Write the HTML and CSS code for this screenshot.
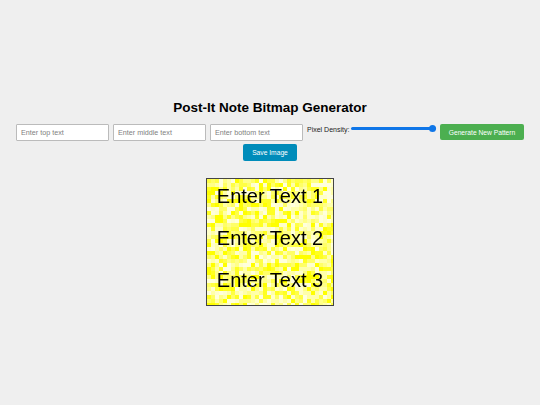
FILE: index.html
```html
<!DOCTYPE html>
<html lang="en">
<head>
    <meta charset="UTF-8">
    <meta name="viewport" content="width=device-width, initial-scale=1.0">
    <title>Post-It Note Bitmap Generator</title>
    <link rel="stylesheet" href="styles.css">
</head>
<body>
    <div class="app">
        <h1 class="title">Post-It Note Bitmap Generator</h1>
        <div class="controls">
            <input type="text" class="text-input" placeholder="Enter top text">
            <input type="text" class="text-input" placeholder="Enter middle text">
            <input type="text" class="text-input" placeholder="Enter bottom text">
            <label class="density-label" for="density">Pixel Density:</label>
            <input type="range" id="density" class="density" min="1" max="10" value="10">
            <button class="button generate">Generate New Pattern</button>
            <button class="button save">Save Image</button>
        </div>
        <div class="note">
            <canvas id="pattern" class="pattern" width="134" height="134"></canvas>
            <div class="note-text">
                <div>Enter Text 1</div>
                <div>Enter Text 2</div>
                <div>Enter Text 3</div>
            </div>
        </div>
    </div>

    <script src="script.js"></script>
</body>
</html>
```

FILE: styles.css
```css
body {
    font-family: "Liberation Sans", Arial, sans-serif;
    display: flex;
    justify-content: center;
    align-items: center;
    height: 100vh;
    margin: 0;
    background-color: #efefef;
}
.app {
    width: 540px;
    display: flex;
    flex-direction: column;
    align-items: center;
}
.title {
    margin: 0 0 8px;
    font-size: 13.5px;
    line-height: 17px;
    color: #000;
}
.controls {
    width: 100%;
    display: flex;
    flex-wrap: wrap;
    justify-content: center;
    align-items: flex-start;
    gap: 3px 4px;
}
.text-input {
    width: 93px;
    height: 17px;
    padding: 0 4px;
    box-sizing: border-box;
    font-family: inherit;
    font-size: 7.2px;
    background-color: #fff;
    border: 1px solid #bbb;
    border-radius: 1px;
}
.text-input::placeholder {
    color: #808080;
}
.density-label {
    width: 40px;
    font-size: 7px;
    line-height: 10px;
    padding-top: 1px;
    white-space: nowrap;
    color: #222;
}
.density {
    width: 85px;
    height: 8px;
    margin: 0;
    appearance: none;
    background: transparent;
}
.density::-webkit-slider-runnable-track {
    height: 3px;
    border-radius: 2px;
    background-color: #0f76e8;
}
.density::-webkit-slider-thumb {
    appearance: none;
    width: 7px;
    height: 7px;
    margin-top: -2px;
    border-radius: 50%;
    background-color: #0f76e8;
}
.button {
    height: 16px;
    padding: 0;
    font-family: inherit;
    font-size: 6.7px;
    color: #fff;
    border: none;
    border-radius: 2px;
}
.generate {
    width: 84px;
    background-color: #4caf50;
}
.save {
    width: 54px;
    height: 17px;
    background-color: #008cba;
}
.note {
    position: relative;
    width: 128px;
    height: 128px;
    margin-top: 17px;
    box-sizing: border-box;
    border: 1px solid #444;
    overflow: hidden;
}
.pattern {
    display: block;
    margin: -4px;
    filter: blur(0.6px);
}
.note-text {
    position: absolute;
    inset: 0;
    display: flex;
    flex-direction: column;
    align-items: center;
    gap: 8px;
    font-size: 20px;
    line-height: 34px;
    color: #000;
}
```

FILE: script.js
```js
const canvas = document.getElementById('pattern');
const ctx = canvas.getContext('2d');
const cell = 4;
const shades = ['#ffff00', '#ffff22', '#ffff44', '#ffff66', '#ffff88', '#ffffaa', '#ffffcc', '#ffffdd'];

let seed = 7;
function random() {
    seed = (seed * 16807) % 2147483647;
    return seed / 2147483647;
}

for (let y = 0; y < canvas.height; y += cell) {
    for (let x = 0; x < canvas.width; x += cell) {
        ctx.fillStyle = shades[Math.floor(random() * shades.length)];
        ctx.fillRect(x, y, cell, cell);
    }
}
```
